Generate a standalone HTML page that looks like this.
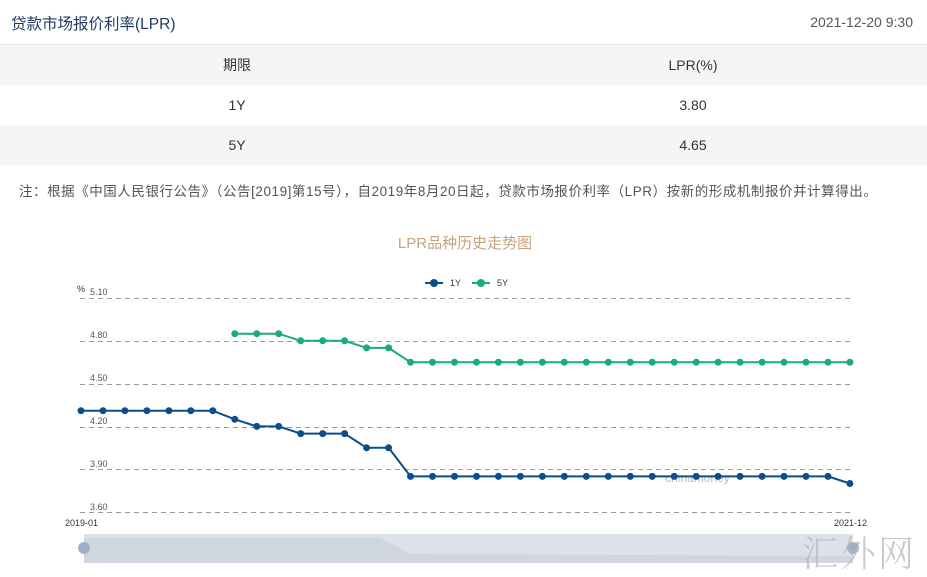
<!DOCTYPE html>
<html><head><meta charset="utf-8"><style>
*{margin:0;padding:0;box-sizing:border-box}
body{width:927px;height:576px;background:#fff;font-family:"Liberation Sans","Noto Sans CJK SC",sans-serif;position:relative;overflow:hidden;color:#333}
.title{position:absolute;left:11px;top:12px;font-size:15.5px;color:#1f3b63}
.date{position:absolute;right:14px;top:14px;font-size:14px;color:#555}
.hr{position:absolute;left:0;top:44px;width:927px;height:1px;background:#e6e6e6}
.row{position:absolute;left:0;width:927px;height:40px;font-size:14px;line-height:40px}
.row span{position:absolute;width:200px;text-align:center}
.c1{left:137px}.c2{left:593px}
.g{background:#f5f5f5}
.note{position:absolute;left:19px;top:180px;font-size:13.5px;color:#555;letter-spacing:0.55px;white-space:nowrap}
.wm{position:absolute;left:802px;top:526px;font-size:36px;color:#bbb;font-family:"Noto Serif CJK SC",serif;font-weight:300;letter-spacing:2px;opacity:.8}
</style></head><body>
<div class="title">贷款市场报价利率(LPR)</div>
<div class="date">2021-12-20 9:30</div>
<div class="hr"></div>
<div class="row g" style="top:45px"><span class="c1">期限</span><span class="c2">LPR(%)</span></div>
<div class="row" style="top:85px"><span class="c1">1Y</span><span class="c2">3.80</span></div>
<div class="row g" style="top:125px"><span class="c1">5Y</span><span class="c2">4.65</span></div>
<div class="note">注：根据《中国人民银行公告》（公告[2019]第15号），自2019年8月20日起，贷款市场报价利率（LPR）按新的形成机制报价并计算得出。</div>
<svg id="s" width="927" height="576" style="position:absolute;left:0;top:0" font-family="Liberation Sans, Noto Sans CJK SC, sans-serif">
<text x="465" y="248" text-anchor="middle" font-size="15" fill="#c8a27c">LPR品种历史走势图</text>
<line x1="425" y1="283" x2="443" y2="283" stroke="#0a4e8c" stroke-width="2"/><circle cx="434" cy="283" r="4" fill="#0a4e8c"/>
<text x="450" y="286" font-size="9" fill="#333">1Y</text>
<line x1="472" y1="283" x2="490" y2="283" stroke="#1aab76" stroke-width="2"/><circle cx="481" cy="283" r="4" fill="#1aab76"/>
<text x="497" y="286" font-size="9" fill="#333">5Y</text>
<text x="77" y="292" font-size="9" fill="#333">%</text>
<g font-size="9" fill="#555">
<text x="90" y="295">5.10</text><text x="90" y="338">4.80</text><text x="90" y="381">4.50</text><text x="90" y="424">4.20</text><text x="90" y="467">3.90</text><text x="90" y="510">3.60</text>
</g>
<g stroke="#999" stroke-dasharray="5,4" stroke-width="1">
<line x1="80" y1="298.5" x2="852" y2="298.5"/><line x1="80" y1="341.5" x2="852" y2="341.5"/><line x1="80" y1="384.5" x2="852" y2="384.5"/><line x1="80" y1="427.5" x2="852" y2="427.5"/><line x1="80" y1="469.5" x2="852" y2="469.5"/><line x1="80" y1="512.5" x2="852" y2="512.5"/>
</g>
<text x="665" y="482" font-size="12" fill="#bbb">chinamoney</text>
<text x="65" y="526" font-size="9" fill="#333">2019-01</text>
<text x="834" y="526" font-size="9" fill="#333">2021-12</text>
<rect x="84" y="534" width="769" height="29" fill="#dde2ea"/>
<path d="M84 538 L380 538 L410 554 L853 556 L853 563 L84 563Z" fill="#cfd6e0"/>
<circle cx="84" cy="548" r="6" fill="#9fb0c8"/>
<circle cx="853" cy="548" r="6" fill="#9fb0c8"/>
<g id="lines"></g>
</svg>
<div class="wm">汇外网</div>
<script>
var b=[4.31,4.31,4.31,4.31,4.31,4.31,4.31,4.25,4.20,4.20,4.15,4.15,4.15,4.05,4.05];
while(b.length<35)b.push(3.85);b.push(3.80);
var g=[];for(var i=0;i<36;i++)g.push(i<7?null:i<10?4.85:i<13?4.80:i<15?4.75:4.65);
function X(i){return 81+i*21.97}function Y(v){return 298+(5.10-v)*142.7}
var h='';
function draw(a,c){var p=[];a.forEach(function(v,i){if(v!=null)p.push(X(i).toFixed(1)+','+Y(v).toFixed(1))});
h+='<polyline points="'+p.join(' ')+'" fill="none" stroke="'+c+'" stroke-width="2"/>';
a.forEach(function(v,i){if(v!=null)h+='<circle cx="'+X(i).toFixed(1)+'" cy="'+Y(v).toFixed(1)+'" r="3.5" fill="'+c+'"/>'});}
draw(b,'#0a4e8c');draw(g,'#1aab76');
document.getElementById('lines').innerHTML=h;
</script>
</body></html>
